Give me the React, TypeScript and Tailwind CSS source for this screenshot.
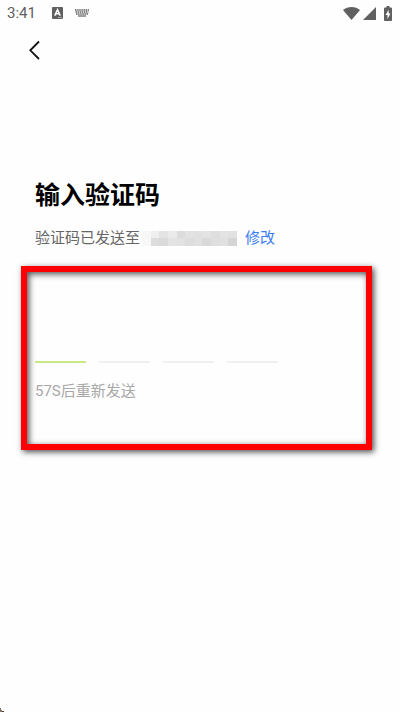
import { useState } from "react";

const MOSAIC = [
  "bg-[#f7f7f7]", "bg-[#efefef]", "bg-[#e3e3e3]", "bg-[#eaeaea]", "bg-[#dcdcdc]", "bg-[#e2e2e2]", "bg-[#e0e0e0]", "bg-[#e3e3e3]", "bg-[#dedede]", "bg-[#e3e3e3]", "bg-[#e1e1e1]",
  "bg-[#f8f8f8]", "bg-[#dddddd]", "bg-[#dadada]", "bg-[#e3e3e3]", "bg-[#e2e2e2]", "bg-[#dddddd]", "bg-[#e0e0e0]", "bg-[#d9d9d9]", "bg-[#dfdfdf]", "bg-[#e0e0e0]", "bg-[#d5d5d5]",
];

function StatusBar() {
  return (
    <header className="flex h-[26px] items-center pr-2 pl-[7px] text-[#606060]">
      <time className="text-[15px] leading-7">3:41</time>
      <svg className="ml-4 h-3 w-[11px]" viewBox="0 0 11 12" aria-hidden="true">
        <rect width="11" height="12" rx="1" fill="currentColor" />
        <path d="M2.8 8.6 5.5 2.6l2.7 6M3.8 6.8h3.4" fill="none" stroke="#fff" strokeWidth="1.5" />
        <path d="M6 10.5h4" stroke="#bbb" strokeWidth="0.8" />
      </svg>
      <svg className="ml-3 h-2 w-3.5" viewBox="0 0 14 8" aria-hidden="true">
        <path d="M0 1h14M.5 3h13M1 5h12" fill="none" stroke="currentColor" strokeWidth="1.3" strokeDasharray="1.5 0.6" />
        <path d="M3 7h8" stroke="currentColor" strokeWidth="1.2" />
      </svg>
      <div className="ml-auto flex items-center">
        <svg className="h-[13px] w-[17px]" viewBox="0 0 17 13" fill="currentColor" aria-hidden="true">
          <path d="M8.5 13 0 3.1C2.4 1.1 5.3 0 8.5 0S14.6 1.1 17 3.1Z" />
        </svg>
        <svg className="ml-[3px] h-[13px] w-[13px]" viewBox="0 0 13 13" fill="currentColor" aria-hidden="true">
          <path d="M13 0v13H0Z" />
        </svg>
        <svg className="ml-2 h-[15px] w-2" viewBox="0 0 8 15" aria-hidden="true">
          <path d="M2.5 0h3v1.5H7a1 1 0 0 1 1 1V14a1 1 0 0 1-1 1H1a1 1 0 0 1-1-1V2.5a1 1 0 0 1 1-1h1.500Z" fill="currentColor" />
          <path d="M4.7 3.8 1.6 9h1.900v4L6.5 7.600H4.700Z" fill="#fff" />
        </svg>
      </div>
    </header>
  );
}

function CodeInputs() {
  const [code, setCode] = useState(["", "", "", ""]);

  return (
    <div className="flex gap-[13px]">
      {code.map((digit, i) => (
        <input
          key={i}
          aria-label={`验证码第${i + 1}位`}
          inputMode="numeric"
          maxLength={1}
          value={digit}
          onChange={(e) => setCode(code.map((d, j) => (j === i ? e.target.value : d)))}
          className="h-10 w-[51px] rounded-none border-b-2 border-[#f0f0f0] text-center text-2xl outline-none first:border-[#c9e886]"
        />
      ))}
    </div>
  );
}

export default function App() {
  return (
    <div className="relative min-h-screen bg-[#fefefe] font-[Roboto,'Noto_Sans_CJK_SC',sans-serif]">
      <StatusBar />
      <nav className="px-7 pt-3.5">
        <button type="button" aria-label="返回" className="block">
          <svg className="h-5 w-3.5" viewBox="0 0 14 20" fill="none" stroke="#111" strokeWidth="1.8" aria-hidden="true">
            <path d="M11 1.5 2.3 10.3 11 19" />
          </svg>
        </button>
      </nav>
      <main className="pt-[118px]">
        <h1 className="px-[35px] text-[25px] leading-9 font-bold text-black">输入验证码</h1>
        <div className="mt-3 flex items-center px-[35px] text-[15px] leading-6 text-[#666]">
          <span>验证码已发送至</span>
          <span className="ml-0.5 grid h-[15px] w-[95px] grid-cols-11 grid-rows-2" role="img" aria-label="手机号已隐藏">
            {MOSAIC.map((tone, i) => (
              <span key={i} className={tone} />
            ))}
          </span>
          <a href="#edit" className="ml-2 text-[#3b7df5]">修改</a>
        </div>
        <section className="mt-4 mr-7 ml-[21px] h-[184px] border-6 border-[#fe0000] px-2 pt-[51px] shadow-[2px_2px_6px_rgba(0,0,0,0.7),inset_2px_2px_6px_rgba(0,0,0,0.7)]">
          <CodeInputs />
          <p className="mt-4 text-[15px] leading-6 text-[#a8a8a8]">57S后重新发送</p>
        </section>
      </main>
      <svg className="absolute bottom-0 left-0 h-1 w-1" viewBox="0 0 4 4" aria-hidden="true">
        <path d="M0 0h1v2H0Z" fill="#777" />
        <path d="M0 2h2v2H0Z" fill="#8a7458" />
        <path d="M2 3h2v1H2Z" fill="#444" />
      </svg>
    </div>
  );
}
